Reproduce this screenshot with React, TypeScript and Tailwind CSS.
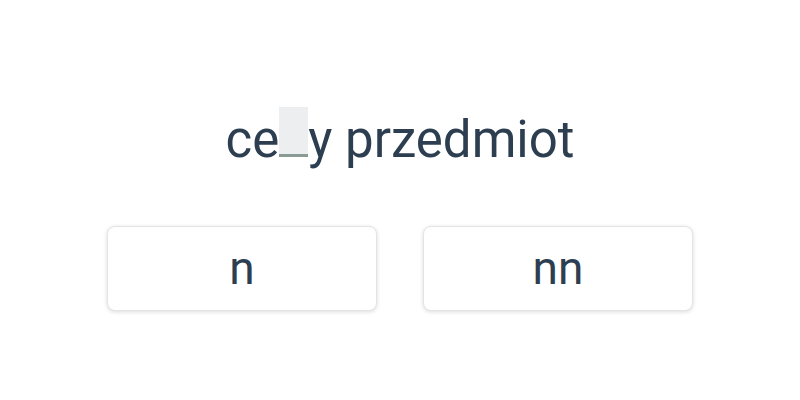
export default function App() {
  return (
    <div className="w-[800px] h-[400px] bg-white flex flex-col items-center" style={{ fontFamily: "Roboto, sans-serif" }}>
      <div className="mt-[107px] flex items-baseline text-[51px] leading-none text-[#2c3e50]">
        <span>ce</span>
        <span className="inline-block w-[29px] h-[50px] bg-[#eceef0] border-b-[3px] border-[#8a9a94]" />
        <span>y przedmiot</span>
      </div>
      <div className="mt-[61px] flex gap-[46px]">
        <button className="w-[270px] h-[85px] rounded-lg bg-white border border-[#e2e4e7] shadow-[0_1px_4px_rgba(0,0,0,0.14)] text-[46px] text-[#2c3e50]">n</button>
        <button className="w-[270px] h-[85px] rounded-lg bg-white border border-[#e2e4e7] shadow-[0_1px_4px_rgba(0,0,0,0.14)] text-[46px] text-[#2c3e50]">nn</button>
      </div>
    </div>
  );
}
